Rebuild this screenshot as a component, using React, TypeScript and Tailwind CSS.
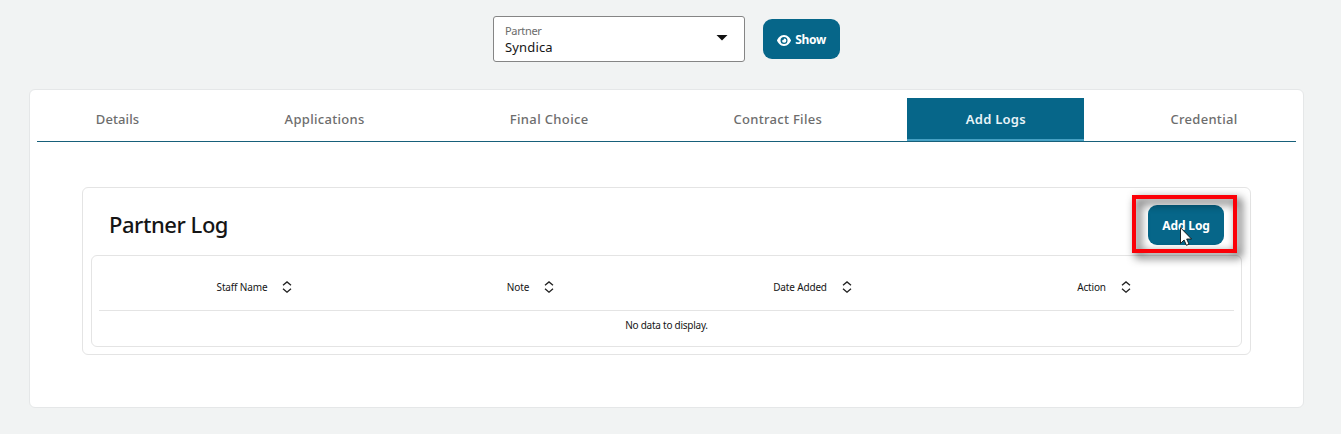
import type { ReactNode } from "react";

const tabs = [
  { label: "Details", box: "w-[161px]", text: "tracking-[0.1px]" },
  { label: "Applications", box: "w-[198px]", text: "tracking-[0.3px]" },
  { label: "Final Choice", box: "w-[196px]", text: "tracking-[0.35px]" },
  { label: "Contract Files", box: "w-[206px]", text: "tracking-[0.3px]" },
  { label: "Add Logs", box: "w-[177px]", text: "tracking-[0.25px]" },
  { label: "Credential", box: "w-[184px]", text: "tracking-[0.3px]" },
];

const columns = ["Staff Name", "Note", "Date Added", "Action"];

function EyeIcon() {
  return (
    <svg viewBox="0 30 576 452" preserveAspectRatio="none" className="h-[11px] w-[14px] shrink-0" fill="currentColor">
      <path d="M288 32c-80.8 0-145.5 36.8-192.6 80.6C48.6 156 17.3 208 2.5 243.7c-3.3 7.9-3.3 16.7 0 24.6C17.3 304 48.6 356 95.4 399.4C142.5 443.2 207.2 480 288 480s145.5-36.8 192.6-80.6c46.8-43.5 78.1-95.4 93-131.1c3.3-7.9 3.3-16.7 0-24.6c-14.9-35.7-46.2-87.7-93-131.1C433.500 68.8 368.800 32 288 32zM144 256a144 144 0 1 1 288 0 144 144 0 1 1 -288 0zm144-82c0 45-37 82-82 82a89 89 0 1 0 82-82z" />
    </svg>
  );
}

function SortIcon() {
  return (
    <svg viewBox="0 0 10 12" className="h-3 w-2.5 shrink-0" fill="none" stroke="#222" strokeWidth="1.3">
      <path d="M1 4.300 5 0.900 9 4.300M1 7.800 5 11.200 9 7.800" />
    </svg>
  );
}

function Cursor() {
  return (
    <svg viewBox="0 0 12 19" className="absolute top-[22px] left-[32px] h-[19px] w-3">
      <path d="M.5.7V16.400L4.100 13 6.400 18.300 9 17.200 6.700 12H11.500Z" fill="#fff" stroke="#111" strokeWidth="0.9" />
    </svg>
  );
}

function Button({ children, className }: { children: ReactNode; className: string }) {
  return (
    <button
      className={`flex h-10 items-center justify-center rounded-[9px] bg-[#066689] pt-0.5 text-[12px] leading-4 font-bold text-white ${className}`}
    >
      {children}
    </button>
  );
}

export default function App() {
  return (
    <main className="h-[434px] w-[1341px] overflow-hidden bg-[#f1f3f3] pt-4 font-['Noto_Sans','Open_Sans',sans-serif] text-[#151515]">
      <div className="ml-[493px] flex h-[46px] items-center gap-[18px]">
        <div className="flex h-[46px] w-[252px] items-center justify-between rounded-[3px] border border-[#858585] bg-white pr-[17px] pl-[11px]">
          <div className="pt-px">
            <div className="text-[11px] leading-[14px] tracking-[-0.35px] text-[#6b6b6b]">Partner</div>
            <div className="text-[13px] leading-[18px] tracking-[0.15px]">Syndica</div>
          </div>
          <svg viewBox="0 0 12 6" className="mb-[2px] -mr-px h-[6px] w-[12px]" fill="#111">
            <path d="M0.500 0H11.500L6 5.500Z" />
          </svg>
        </div>
        <Button className="w-[77px] gap-1">
          <EyeIcon />
          <span className="tracking-[-0.3px]">Show</span>
        </Button>
      </div>

      <section className="mt-[27px] ml-[29px] h-[319px] w-[1275px] rounded-md border border-[#e5e7e8] bg-white px-[7px] pt-2">
        <nav className="flex h-11 justify-between border-b border-[#17607a]">
          {tabs.map((tab) => {
            const active = tab.label === "Add Logs";
            return (
              <div
                key={tab.label}
                className={`flex h-[43px] items-center justify-center text-[13px] whitespace-nowrap ${tab.box} ${
                  active
                    ? "-ml-px border-b-2 border-[#46a1c4] bg-[#066689] pt-0.5 font-semibold text-[#e9f4f8]"
                    : "font-medium text-[#6d6d6d]"
                }`}
              >
                <span className={tab.text}>{tab.label}</span>
              </div>
            );
          })}
        </nav>

        <div className="mt-[45px] ml-[45px] h-[168px] w-[1169px] rounded-md border border-[#e4e4e4] px-2">
          <header className="flex h-[67px] items-center justify-between pt-[7px] pr-[18px] pl-[18px]">
            <h1 className="-mt-0.5 text-[22px] font-medium tracking-[-0.45px]">Partner Log</h1>
            <div className="relative">
              <Button className="w-[76px] tracking-[-0.15px]">Add Log</Button>
              <div className="absolute -top-[10px] -left-4 h-[58px] w-[105px] border-4 border-[#fb0007] drop-shadow-[4px_4px_5px_rgba(0,0,0,0.85)]" />
              <Cursor />
            </div>
          </header>
          <div className="h-[92px] rounded-md border border-[#e4e4e4] px-[7px] text-[10px]">
            <div className="grid h-[55px] grid-cols-[311px_241px_323px_260px] border-b border-[#e4e4e4] pt-2">
              {columns.map((label) => (
                <div key={label} className="flex items-center justify-center gap-[15px]">
                  <span className="pt-px tracking-[-0.15px]">{label}</span>
                  <SortIcon />
                </div>
              ))}
            </div>
            <p className="pt-[7px] text-center leading-[14px] tracking-[-0.25px]">No data to display.</p>
          </div>
        </div>
      </section>
    </main>
  );
}
